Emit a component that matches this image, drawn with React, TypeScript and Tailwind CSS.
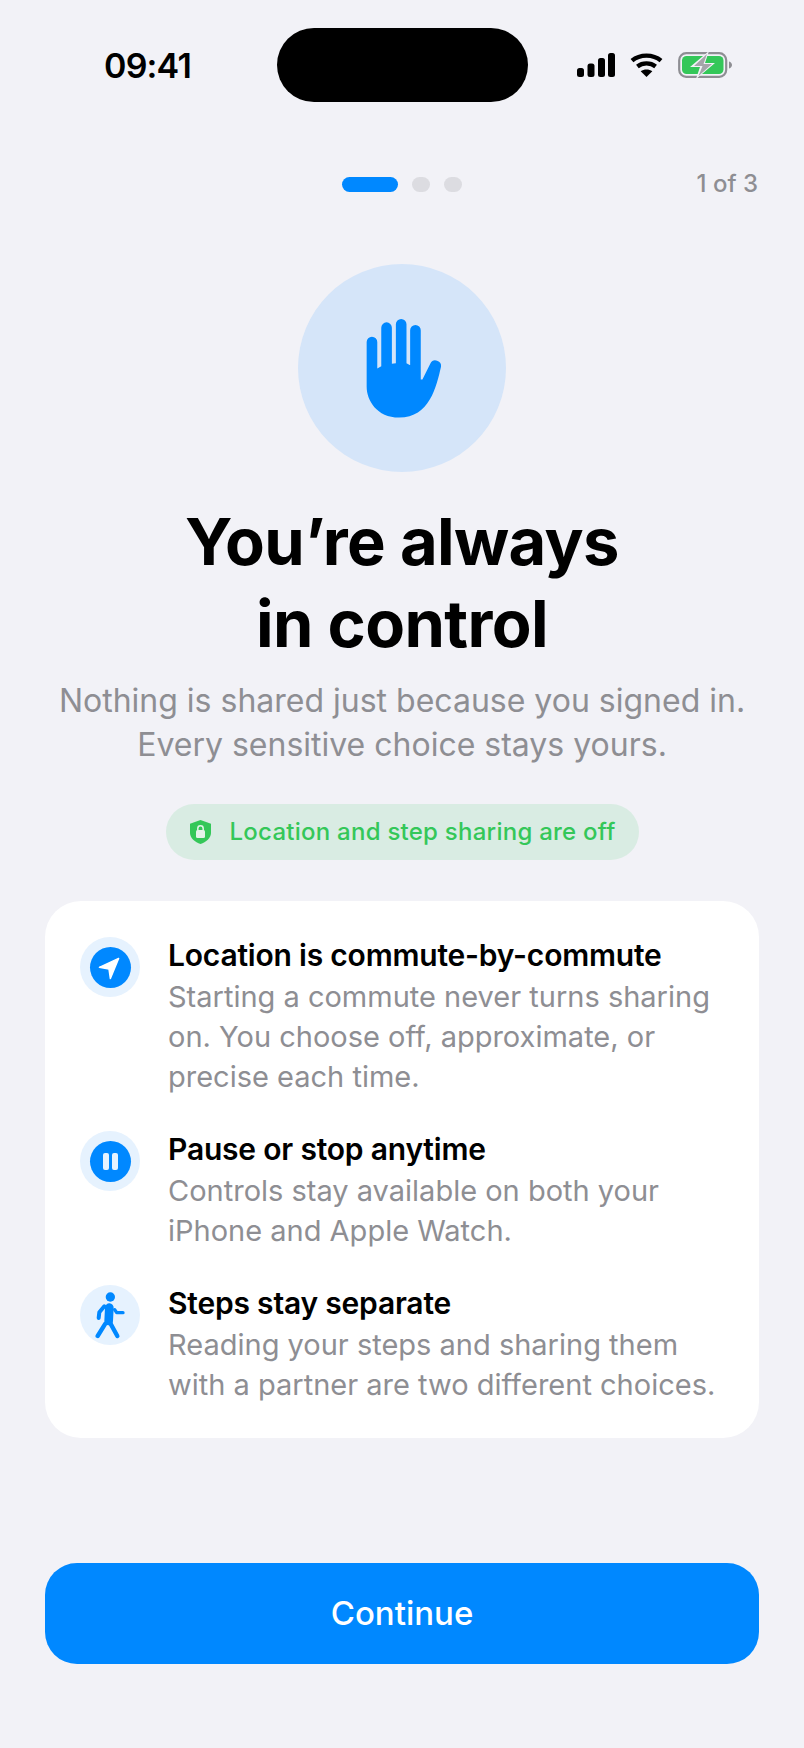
const font = { fontFamily: '"Inter", "Liberation Sans", sans-serif' };

function StatusIcons() {
  return (
    <div className="flex items-center">
      <svg width="38" height="24" viewBox="0 0 38 24" fill="#000">
        <rect x="0" y="15" width="7" height="9" rx="2.5" />
        <rect x="10.5" y="10.5" width="7" height="13.5" rx="2.5" />
        <rect x="21" y="5" width="7" height="19" rx="2.5" />
        <rect x="31" y="0" width="7" height="24" rx="2.5" />
      </svg>
      <svg className="ml-[15px]" width="33" height="24" viewBox="0 0 33 24" fill="none" stroke="#000" strokeWidth="4.4">
        <path d="M2 7.6C10 0.9 23 0.9 31 7.6" />
        <path d="M7.4 13.4C12.6 9.4 20.4 9.4 25.6 13.4" />
        <path d="M16.5 24L10.7 18.2C14 15.8 19 15.8 22.3 18.2Z" fill="#000" stroke="none" />
      </svg>
      <svg className="ml-[15px]" width="55" height="26" viewBox="0 0 55 26" fill="none">
        <rect x="1.2" y="1.2" width="47" height="23.6" rx="7" stroke="#8e8e93" strokeWidth="2.2" />
        <rect x="4" y="4" width="41.5" height="18" rx="4.5" fill="#34c759" />
        <path d="M51 9.5c2 .6 3 2 3 3.5s-1 2.9-3 3.5Z" fill="#8e8e93" />
        <path d="M31 -1L12 15H22L18 27L37 11H27Z" fill="#f2f2f7" />
        <path d="M29 2L16 14H24.5L20.5 24L34 12H25.5Z" fill="#a5a5aa" />
      </svg>
    </div>
  );
}

function HandIcon() {
  return (
    <svg className="ml-[4px]" width="78" height="103" viewBox="255 200 235 310" fill="#0088ff">
      <path d="M260 275a16 16 0 0 1 32 0V355L304 348V232a16 16 0 0 1 32 0V341L348 339V222a16 16 0 0 1 32 0V339L391 345V240a16 16 0 0 1 32 0V388L428 388L452 340a17 17 0 0 1 32 10C470 410 450 503 358 503C290 503 260 450 260 410Z" />
    </svg>
  );
}

function ShieldIcon() {
  return (
    <svg width="21" height="24" viewBox="0 0 21 24">
      <path d="M10.5 0L21 3.8V13C21 18 16 22 10.5 24C5 22 0 18 0 13V3.8Z" fill="#34c759" />
      <rect x="6" y="10" width="9" height="8" rx="1.5" fill="#e4f3ea" />
      <path d="M7.8 10.5V8.5a2.7 2.7 0 0 1 5.4 0V10.5" fill="none" stroke="#e4f3ea" strokeWidth="1.5" />
    </svg>
  );
}

function NavBadge() {
  return (
    <div className="flex h-[60px] w-[60px] shrink-0 items-center justify-center rounded-full bg-[#e6f2fe]">
      <div className="flex h-[41px] w-[41px] items-center justify-center rounded-full bg-[#0088ff]">
        <svg className="mt-[2px] -ml-[2px]" width="22" height="23" viewBox="0 0 24 25" fill="#fff" stroke="#fff" strokeWidth="1.6" strokeLinejoin="round">
          <path d="M22.5 1.5L1.5 11.2L12 13.2L13.5 23.5Z" />
        </svg>
      </div>
    </div>
  );
}

function PauseBadge() {
  return (
    <div className="flex h-[60px] w-[60px] shrink-0 items-center justify-center rounded-full bg-[#e6f2fe]">
      <div className="flex h-[41px] w-[41px] items-center justify-center gap-[3px] rounded-full bg-[#0088ff]">
        <span className="h-[17px] w-[6px] rounded-[2px] bg-white/90" />
        <span className="h-[17px] w-[6px] rounded-[2px] bg-white/90" />
      </div>
    </div>
  );
}

function WalkBadge() {
  return (
    <div className="flex h-[60px] w-[60px] shrink-0 items-center justify-center rounded-full bg-[#e6f2fe]">
      <svg width="30" height="48" viewBox="105 60 90 144" fill="none" stroke="#0088ff" strokeLinecap="round" strokeLinejoin="round">
        <circle cx="151" cy="78" r="14" fill="#0088ff" stroke="none" />
        <path d="M148 110L146 150" strokeWidth="26" />
        <path d="M133 106L118 124L116 141" strokeWidth="12" />
        <path d="M164 116L170 125H189" strokeWidth="10" />
        <path d="M136 158L113 195" strokeWidth="13" />
        <path d="M150 155L172 195" strokeWidth="13" />
      </svg>
    </div>
  );
}

function Row({ badge, title, lines }: { badge: React.ReactNode; title: string; lines: string[] }) {
  return (
    <div className="flex gap-[28px]">
      {badge}
      <div className="min-w-0">
        <div className="mb-[4px] text-[30px] leading-[36px] font-semibold tracking-[-0.2px] whitespace-nowrap text-black">{title}</div>
        {lines.map(l => (
          <div key={l} className="text-[29px] leading-[40px] whitespace-nowrap text-[#8e8e93]">
            {l}
          </div>
        ))}
      </div>
    </div>
  );
}

export default function App() {
  return (
    <div className="flex h-[1748px] w-full flex-col overflow-hidden bg-[#f2f2f7]" style={font}>
      <div className="mt-[28px] grid h-[74px] grid-cols-[1fr_251px_1fr] items-center">
        <div className="pl-[104px] text-[34px] font-semibold tracking-[-0.8px] text-black">09:41</div>
        <div className="h-[74px] rounded-[37px] bg-black" />
        <div className="flex justify-end pr-[71px]">
          <StatusIcons />
        </div>
      </div>

      <div className="mt-[64px] grid grid-cols-3 items-center px-[46px]">
        <div />
        <div className="flex items-center justify-center gap-[14px]">
          <span className="h-[15px] w-[56px] rounded-full bg-[#0088ff]" />
          <span className="h-[15px] w-[18px] rounded-full bg-[#dcdce1]" />
          <span className="h-[15px] w-[18px] rounded-full bg-[#dcdce1]" />
        </div>
        <div className="text-right text-[24px] font-medium text-[#8e8e93]">1 of 3</div>
      </div>

      <div className="mt-[62px] flex justify-center">
        <div className="flex h-[208px] w-[208px] items-center justify-center rounded-full bg-[#d5e5f9]">
          <HandIcon />
        </div>
      </div>

      <h1 className="mt-[29px] text-center text-[65px] leading-[82px] font-bold tracking-[-0.6px] text-black">
        You’re always
        <br />
        in control
      </h1>

      <p className="mt-[14px] text-center text-[32px] leading-[44px] text-[#8e8e93]">
        Nothing is shared just because you signed in.
        <br />
        Every sensitive choice stays yours.
      </p>

      <div className="mt-[37px] flex justify-center">
        <div className="flex h-[56px] w-[473px] items-center gap-[19px] rounded-full bg-[#d9ece3] pl-[24px]">
          <ShieldIcon />
          <span className="text-[24px] font-medium tracking-[0.25px] whitespace-nowrap text-[#34c759]">
            Location and step sharing are off
          </span>
        </div>
      </div>

      <div className="mx-[45px] mt-[41px] flex h-[537px] flex-col gap-[34px] rounded-[36px] bg-white pt-[36px] pl-[35px]">
        <Row
          badge={<NavBadge />}
          title="Location is commute-by-commute"
          lines={['Starting a commute never turns sharing', 'on. You choose off, approximate, or', 'precise each time.']}
        />
        <Row
          badge={<PauseBadge />}
          title="Pause or stop anytime"
          lines={['Controls stay available on both your', 'iPhone and Apple Watch.']}
        />
        <Row
          badge={<WalkBadge />}
          title="Steps stay separate"
          lines={['Reading your steps and sharing them', 'with a partner are two different choices.']}
        />
      </div>

      <button className="mx-[45px] mt-[125px] h-[101px] rounded-[32px] bg-[#0088ff] text-[33px] font-medium text-white">
        Continue
      </button>
    </div>
  );
}
